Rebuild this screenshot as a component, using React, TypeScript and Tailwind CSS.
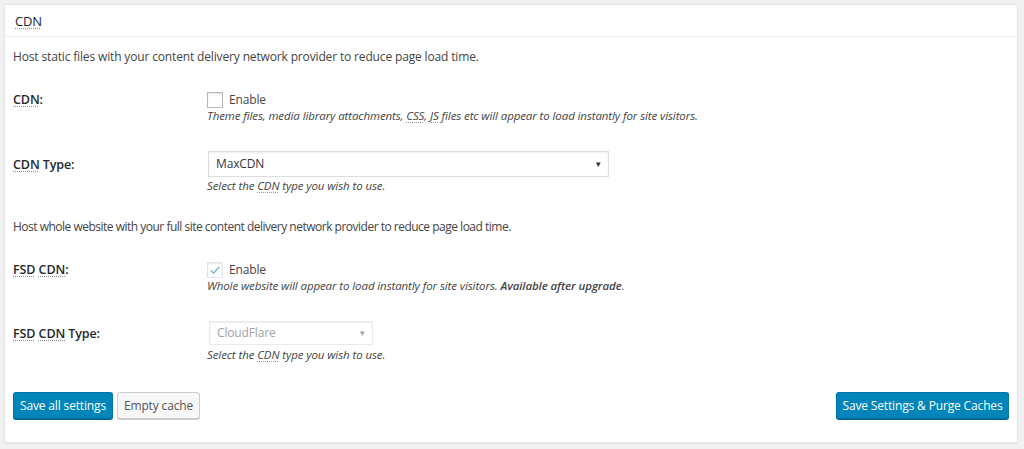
import React from "react";

const Abbr = ({ children, title }: { children: React.ReactNode; title: string }) => (
  <abbr title={title} className="underline decoration-dotted decoration-[#999] underline-offset-2">
    {children}
  </abbr>
);

const Checkbox = ({ checked, disabled }: { checked?: boolean; disabled?: boolean }) => (
  <span
    className={`flex h-[16px] w-[16px] items-center justify-center border bg-white shadow-[inset_0_1px_2px_rgba(0,0,0,0.1)] ${
      disabled ? "border-[#e2e4e7]" : "border-[#b4b9be]"
    }`}
  >
    {checked && (
      <svg width="16" height="16" viewBox="0 0 20 20">
        <path d="M4 10.5l4 4 8-9" fill="none" stroke={disabled ? "#8dc0da" : "#1e8cbe"} strokeWidth="2.4" />
      </svg>
    )}
  </span>
);

const FakeSelect = ({ value, width, disabled }: { value: string; width: string; disabled?: boolean }) => (
  <div
    className={`flex items-center justify-between border bg-white pl-[7px] pr-[6px] shadow-[inset_0_1px_2px_rgba(0,0,0,0.07)] ${width} ${
      disabled ? "h-[24px] border-[#eaeaea] text-[#a0a5aa]" : "h-[26px] border-[#ddd] text-[#32373c]"
    }`}
  >
    <span>{value}</span>
    <span className={`text-[8px] ${disabled ? "text-[#a0a5aa]" : "text-[#32373c]"}`}>▼</span>
  </div>
);

const Label = ({ children, pt }: { children: React.ReactNode; pt: string }) => (
  <div className={`w-[194px] shrink-0 text-[12.5px] leading-[16px] font-semibold tracking-[-0.1px] text-[#23282d] ${pt}`}>
    {children}
  </div>
);

const Desc = ({ children, mt = "" }: { children: React.ReactNode; mt?: string }) => (
  <p className={`text-[11.5px] italic leading-[16px] tracking-[-0.1px] ${mt}`}>{children}</p>
);

export default function App() {
  return (
    <div
      className="h-[449px] w-[1024px] bg-[#f1f1f1] pt-[4px] pr-[6px] pb-[6px] pl-[4px] text-[12px] tracking-[-0.15px] text-[#444]"
      style={{ fontFamily: '"Open Sans", "Noto Sans", sans-serif' }}
    >
      <div className="flex h-full flex-col border border-[#e5e5e5] bg-white shadow-[0_1px_1px_rgba(0,0,0,0.04)]">
        <div className="h-[32px] border-b border-[#eee] px-[10px] pt-[6px] text-[13px] leading-[20px] text-[#23282d]">
          <Abbr title="Content Delivery Network">CDN</Abbr>
        </div>

        <div className="flex flex-1 flex-col px-[8px]">
          <p className="mt-[10px] leading-[20px]">
            Host static files with your content delivery network provider to reduce page load time.
          </p>

          <div className="mt-[25px] flex">
            <Label pt="pt-0">
              <Abbr title="Content Delivery Network">CDN</Abbr>:
            </Label>
            <div>
              <div className="flex h-[16px] items-center gap-[6px]">
                <Checkbox />
                <span>Enable</span>
              </div>
              <Desc>
                Theme files, media library attachments, <Abbr title="Cascading Style Sheets">CSS</Abbr>,{" "}
                <Abbr title="JavaScript">JS</Abbr> files etc will appear to load instantly for site visitors.
              </Desc>
            </div>
          </div>

          <div className="mt-[27px] flex">
            <Label pt="pt-[6px]">
              <Abbr title="Content Delivery Network">CDN</Abbr> Type:
            </Label>
            <div>
              <div className="pl-[1px]">
                <FakeSelect value="MaxCDN" width="w-[401px]" />
              </div>
              <Desc mt="mt-[1px]">
                Select the <Abbr title="Content Delivery Network">CDN</Abbr> type you wish to use.
              </Desc>
            </div>
          </div>

          <p className="mt-[23px] leading-[20px] tracking-[-0.5px]">
            Host whole website with your full site content delivery network provider to reduce page load time.
          </p>

          <div className="mt-[25px] flex">
            <Label pt="pt-0">
              <Abbr title="Full Site Delivery">FSD</Abbr> <Abbr title="Content Delivery Network">CDN</Abbr>:
            </Label>
            <div>
              <div className="flex h-[16px] items-center gap-[6px]">
                <Checkbox checked disabled />
                <span>Enable</span>
              </div>
              <Desc>
                Whole website will appear to load instantly for site visitors.{" "}
                <strong className="font-semibold">Available after upgrade</strong>.
              </Desc>
            </div>
          </div>

          <div className="mt-[27px] flex">
            <Label pt="pt-[5px]">
              <Abbr title="Full Site Delivery">FSD</Abbr> <Abbr title="Content Delivery Network">CDN</Abbr> Type:
            </Label>
            <div>
              <div className="pl-[2px]">
                <FakeSelect value="CloudFlare" width="w-[164px]" disabled />
              </div>
              <Desc mt="mt-[2px]">
                Select the <Abbr title="Content Delivery Network">CDN</Abbr> type you wish to use.
              </Desc>
            </div>
          </div>

          <div className="mt-[29px] flex items-start justify-between">
            <div className="flex gap-[4px]">
              <button className="h-[27px] w-[100px] rounded-[3px] border border-[#0073aa] border-b-[#006799] bg-[#0085ba] text-[12px] text-white shadow-[0_1px_0_#006799]">
                Save all settings
              </button>
              <button className="h-[27px] w-[83px] rounded-[3px] border border-[#ccc] bg-[#f7f7f7] text-[12px] text-[#555] shadow-[0_1px_0_#ccc]">
                Empty cache
              </button>
            </div>
            <button className="h-[27px] w-[173px] rounded-[3px] border border-[#0073aa] border-b-[#006799] bg-[#0085ba] text-[12px] text-white shadow-[0_1px_0_#006799]">
              Save Settings &amp; Purge Caches
            </button>
          </div>
        </div>
      </div>
    </div>
  );
}
